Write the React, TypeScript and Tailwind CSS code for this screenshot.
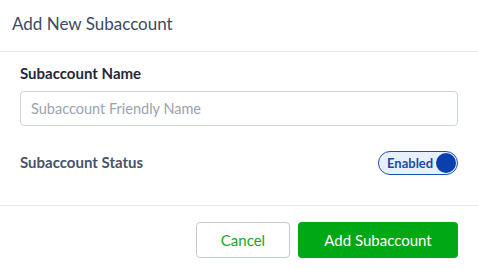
import React, { useState } from 'react';

const App: React.FC = () => {
  const [enabled, setEnabled] = useState(true);

  return (
    <div className="w-[478px] h-[269px] bg-white font-['Lato',sans-serif] flex flex-col">
      {/* header */}
      <div className="h-[52px] border-b border-[#e6e8eb] flex items-center px-3">
        <h1 className="text-[17px] text-[#3b4a62] pb-[3px]">Add New Subaccount</h1>
      </div>

      {/* body */}
      <div className="px-5 pt-[12px] border-b border-[#e6e8eb] h-[154px]">
        <label className="block text-[15px] font-bold text-[#1f2a3a] leading-[18px]">Subaccount Name</label>
        <input
          type="text"
          placeholder="Subaccount Friendly Name"
          className="mt-[9px] w-full h-[35px] rounded-[4px] border border-[#cfd5dd] px-[10px] text-[14.5px] text-[#1f2a3a] placeholder:text-[#9aa3af] outline-none"
        />
        <div className="flex items-center justify-between mt-[25px]">
          <span className="text-[15px] font-bold text-[#46546b] pb-[2px]">Subaccount Status</span>
          <button
            onClick={() => setEnabled(!enabled)}
            className="w-[80px] h-[24px] rounded-full border border-[#1a4fb4] bg-[#e8f0fc] flex items-center justify-between pl-[8px] pr-[1px]"
          >
            <span className="text-[13px] font-bold text-[#1a4aa8]">{enabled ? 'Enabled' : 'Disabled'}</span>
            <span className="w-[20px] h-[20px] rounded-full bg-[#0a3fae]" />
          </button>
        </div>
      </div>

      {/* footer */}
      <div className="flex justify-end gap-2 px-5 pt-4">
        <button className="w-[94px] h-[36px] rounded-[4px] border border-[#c3cad5] text-[15px] text-[#17a51e] bg-white">
          Cancel
        </button>
        <button className="w-[160px] h-[36px] rounded-[4px] bg-[#00a815] text-[15px] text-white">
          Add Subaccount
        </button>
      </div>
    </div>
  );
};

export default App;
